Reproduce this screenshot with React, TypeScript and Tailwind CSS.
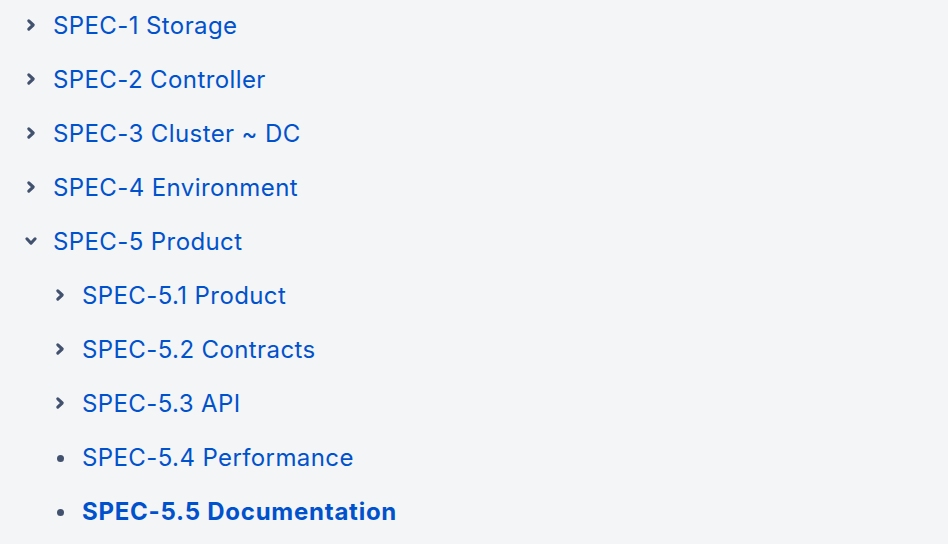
type Item = {
  label: string;
  depth: number;
  kind: 'closed' | 'open' | 'leaf';
  active?: boolean;
};

const items: Item[] = [
  { label: 'SPEC-1 Storage', depth: 0, kind: 'closed' },
  { label: 'SPEC-2 Controller', depth: 0, kind: 'closed' },
  { label: 'SPEC-3 Cluster ~ DC', depth: 0, kind: 'closed' },
  { label: 'SPEC-4 Environment', depth: 0, kind: 'closed' },
  { label: 'SPEC-5 Product', depth: 0, kind: 'open' },
  { label: 'SPEC-5.1 Product', depth: 1, kind: 'closed' },
  { label: 'SPEC-5.2 Contracts', depth: 1, kind: 'closed' },
  { label: 'SPEC-5.3 API', depth: 1, kind: 'closed' },
  { label: 'SPEC-5.4 Performance', depth: 1, kind: 'leaf' },
  { label: 'SPEC-5.5 Documentation', depth: 1, kind: 'leaf', active: true },
];

const Marker = ({ kind }: { kind: Item['kind'] }) => {
  if (kind === 'leaf') {
    return <span className="block w-[7px] h-[7px] rounded-full bg-[#42526e]" />;
  }
  return (
    <svg
      className={kind === 'open' ? 'w-4 h-4 rotate-90 -mt-[2px]' : 'w-4 h-4 -mt-[2px]'}
      viewBox="0 0 16 16"
      fill="none"
      stroke="#42526e"
      strokeWidth="3.1"
      strokeLinecap="round"
      strokeLinejoin="round"
    >
      <path d="M5.8 3.9l4.4 4.1-4.4 4.1" />
    </svg>
  );
};

export default function App() {
  return (
    <div className="min-h-[544px] w-full bg-[#f4f5f7] pt-[11px] font-['Inter',sans-serif]">
      <ul className="flex flex-col gap-[24px]">
        {items.map((item) => (
          <li
            key={item.label}
            className={item.depth === 1 ? 'flex items-center h-[30px] pl-[52px] gap-[14px]' : 'flex items-center h-[30px] pl-[23px] gap-[14px]'}
          >
            <span className="w-4 h-4 flex items-center justify-center">
              <Marker kind={item.kind} />
            </span>
            <a
              href="#"
              className={
                item.active
                  ? 'text-[24px] leading-[30px] font-bold tracking-[0.75px] text-[#0052cc]'
                  : 'text-[24px] leading-[30px] tracking-[0.4px] text-[#0052cc]'
              }
            >
              {item.label}
            </a>
          </li>
        ))}
      </ul>
    </div>
  );
}
